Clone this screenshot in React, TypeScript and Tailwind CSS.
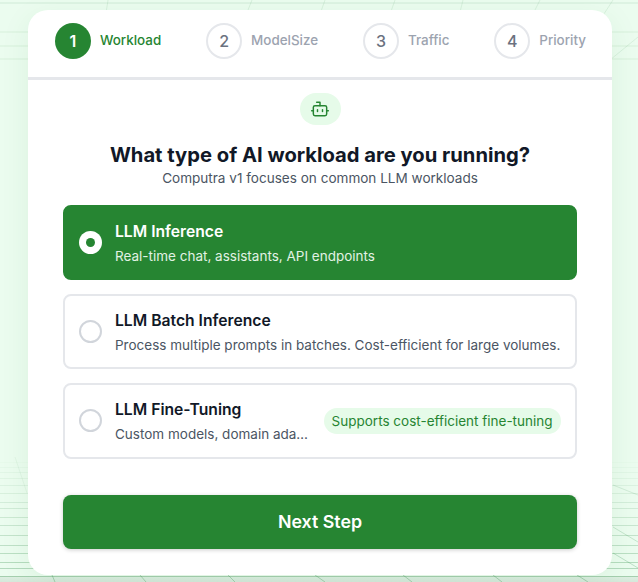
import React from "react";

function Bot() {
  return (
    <svg width="20" height="20" viewBox="0 0 24 24" fill="none" stroke="#268532" strokeWidth="1.75" strokeLinecap="round" strokeLinejoin="round">
      <path d="M12 8V4H8" />
      <rect width="16" height="12" x="4" y="8" rx="2" />
      <path d="M2 14h2" />
      <path d="M20 14h2" />
      <path d="M15 13v2" />
      <path d="M9 13v2" />
    </svg>
  );
}

function Background() {
  const c = "#2f8a45";
  const top: [number, number][] = [[3, 0.14], [32, 0.1], [46, 0.1], [59, 0.1]];
  const bottom = [462, 467, 472, 478, 485, 493, 502, 508, 517, 525, 535, 545, 553, 562, 568, 576];
  const topDiag = [[108, 105], [325, 318], [540, 530], [252, 244], [395, 388], [463, 458], [613, 600]];
  const lower = [[52, 55], [140, 146], [228, 235], [315, 325], [403, 412], [493, 502], [577, 588]];
  return (
    <svg className="absolute inset-0" width="638" height="582" viewBox="0 0 638 582">
      <defs>
        <linearGradient id="fade" x1="0" y1="0" x2="0" y2="1">
          <stop offset="0" stopColor="#d5e8da" stopOpacity="0.6" />
          <stop offset="1" stopColor="#d5e8da" stopOpacity="1" />
        </linearGradient>
      </defs>
      {top.map(([y, o]) => (
        <line key={"t" + y} x1="0" x2="638" y1={y} y2={y} stroke={c} strokeOpacity={o} />
      ))}
      {topDiag.map(([a, b], i) => (
        <line key={"d" + i} x1={a} y1="0" x2={b} y2="20" stroke={c} strokeOpacity="0.1" />
      ))}
      <line x1="638" y1="37" x2="610" y2="60" stroke={c} strokeOpacity="0.1" />
      <rect x="0" y="576" width="638" height="6" fill="url(#fade)" />
      {bottom.map((y) => (
        <line key={"b" + y} x1="0" x2="638" y1={y + 0.5} y2={y + 0.5} stroke={c} strokeOpacity={Math.min(0.32, 0.02 + ((y - 462) / 114) * 0.3)} />
      ))}
      <line x1="15" y1="457" x2="27" y2="493" stroke={c} strokeOpacity="0.06" />
      <line x1="613" y1="485" x2="638" y2="495" stroke={c} strokeOpacity="0.14" />
      <line x1="613" y1="527" x2="638" y2="542" stroke={c} strokeOpacity="0.2" />
      <line x1="613" y1="553" x2="638" y2="568" stroke={c} strokeOpacity="0.24" />
      {lower.map(([a, b], i) => (
        <line key={"l" + i} x1={a} y1="575" x2={b} y2="582" stroke={c} strokeOpacity="0.3" />
      ))}
    </svg>
  );
}

function Step({ n, label, active }: { n: number; label: string; active?: boolean }) {
  return (
    <div className="flex items-center gap-[9px]">
      <div
        className={
          active
            ? "w-9 h-9 rounded-full bg-[#268532] text-white font-semibold flex items-center justify-center text-base"
            : "w-9 h-9 rounded-full border-2 border-[#e5e7eb] bg-white text-[#6b7280] font-medium flex items-center justify-center text-base"
        }
      >
        {n}
      </div>
      <span className={active ? "text-[13.4px] font-medium text-[#268532] -mt-[2px]" : "text-[13.4px] font-medium text-[#9ca3af] -mt-[2px]"}>{label}</span>
    </div>
  );
}

function Option({ title, desc, selected, badge }: { title: string; desc: string; selected?: boolean; badge?: string }) {
  return (
    <div
      className={
        selected
          ? "h-[75.4px] rounded-lg border-2 border-[#268532] bg-[#268532] flex items-center pl-[14px] pr-[14px]"
          : "h-[75.4px] rounded-lg border-2 border-[#e5e7eb] bg-white flex items-center pl-[14px] pr-[14px]"
      }
    >
      {selected ? (
        <div className="w-[23px] h-[23px] rounded-full bg-white flex items-center justify-center shrink-0">
          <div className="w-[9px] h-[9px] rounded-full bg-[#268532]" />
        </div>
      ) : (
        <div className="w-[23px] h-[23px] rounded-full border-2 border-[#d1d5db] bg-white shrink-0" />
      )}
      <div className="ml-[13px] min-w-0 flex-1 pt-[2px]">
        <div className={selected ? "text-[15.7px] leading-[22px] font-semibold text-white" : "text-[15.7px] leading-[22px] font-semibold text-[#111827]"}>{title}</div>
        <div className={selected ? "mt-[3px] text-[13.5px] leading-[20px] text-[#e2f2e4] truncate" : "mt-[3px] text-[13.5px] leading-[20px] text-[#4b5563] truncate"}>{desc}</div>
      </div>
      {badge && (
        <span className="ml-[12px] shrink-0 rounded-full bg-[#e6fbe9] text-[#268532] text-[13.5px] leading-[20px] pl-[7.5px] pr-[8.5px] py-[3px] font-normal">{badge}</span>
      )}
    </div>
  );
}

export default function App() {
  return (
    <div className="relative w-[638px] h-[582px] overflow-hidden bg-[#ebfcef] font-['Inter',sans-serif]">
      <Background />
      <div className="absolute left-[28px] top-[10px] w-[584px] h-[565px] rounded-[20px] bg-white shadow-[0_8px_30px_rgba(38,133,50,0.08)] flex flex-col">
        <div className="h-[70px] shrink-0 border-b-[3px] border-[#e5e7eb] pl-[27px] pr-[26px] pt-[13px] flex justify-between items-start">
          <Step n={1} label="Workload" active />
          <Step n={2} label="ModelSize" />
          <Step n={3} label="Traffic" />
          <Step n={4} label="Priority" />
        </div>
        <div className="flex-1 px-[35px] flex flex-col">
          <div className="mt-[13px] self-center w-[41px] h-[32px] rounded-full bg-[#e6fbe9] flex items-center justify-center">
            <Bot />
          </div>
          <h1 className="mt-[16px] text-center text-[20.2px] leading-[28px] font-bold text-[#111827]">What type of AI workload are you running?</h1>
          <p className="text-center text-[13.55px] leading-[18px] text-[#4b5563]">Computra v1 focuses on common LLM workloads</p>
          <div className="mt-[17.5px] flex flex-col gap-[14px]">
            <Option selected title="LLM Inference" desc="Real-time chat, assistants, API endpoints" />
            <Option title="LLM Batch Inference" desc="Process multiple prompts in batches. Cost-efficient for large volumes." />
            <Option title="LLM Fine-Tuning" desc="Custom models, domain adaptation and private data training" badge="Supports cost-efficient fine-tuning" />
          </div>
          <button className="mt-[36px] h-[54px] pt-[1px] rounded-lg bg-[#268532] text-white text-[17.8px] font-semibold shadow-[0_1px_4px_rgba(0,0,0,0.2)]">Next Step</button>
        </div>
      </div>
    </div>
  );
}
